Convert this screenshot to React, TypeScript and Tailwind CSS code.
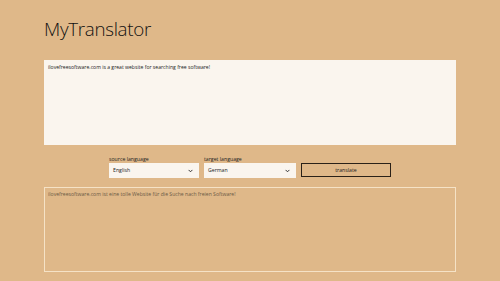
import { useState } from "react";

function Chevron() {
  return (
    <svg width="5" height="4" viewBox="0 0 5 4" className="absolute right-[6px] top-[6px] w-[5px] h-[4px]">
      <path d="M0.6 0.9 L2.5 2.8 L4.4 0.9" fill="none" stroke="#222" strokeWidth="0.9" />
    </svg>
  );
}

export default function App() {
  const [source, setSource] = useState(
    "ilovefreesoftware.com is a great website for searching free software!"
  );

  return (
    <div className="w-[500px] h-[281px] bg-[#dfb889] overflow-hidden font-['Open_Sans',sans-serif]">
      <div className="px-[44px] pt-[15px]">
        <h1 className="text-[18.8px] font-light leading-[28px] text-[#111] tracking-[-0.3px]">
          MyTranslator
        </h1>

        <textarea
          value={source}
          onChange={(e) => setSource(e.target.value)}
          className="
            mt-[17px]
            block
            w-[412px]
            h-[85px]
            resize-none
            bg-[#faf5ee]
            px-[4px]
            py-[3px]
            text-[5.1px]
            leading-[8px]
            text-[#222]
            outline-none
          "
        />

        <div className="mt-[10px] ml-[65px] flex items-end gap-[5px]">
          <div className="flex flex-col">
            <span className="text-[5.2px] leading-[8px] text-[#222]">source language</span>
            <div className="relative w-[90px] h-[15px] bg-[#faf5ee]">
              <span className="absolute left-[4px] top-[3px] text-[5.2px] leading-[8px] text-[#222]">
                English
              </span>
              <Chevron />
            </div>
          </div>

          <div className="flex flex-col">
            <span className="text-[5.2px] leading-[8px] text-[#222]">target language</span>
            <div className="relative w-[92px] h-[15px] bg-[#faf5ee]">
              <span className="absolute left-[4px] top-[3px] text-[5.2px] leading-[8px] text-[#222]">
                German
              </span>
              <Chevron />
            </div>
          </div>

          <button className="
            w-[90px]
            h-[14px]
            mb-[1px]
            border-[1.5px]
            border-[#2a2118]
            text-[5.2px]
            leading-[8px]
            text-[#222]
          ">
            translate
          </button>
        </div>

        <div className="
          mt-[9px]
          w-[412px]
          h-[85px]
          border
          border-[#f5e2c6]
          px-[3px]
          py-[2px]
          text-[5.1px]
          leading-[8px]
          text-[#6b5a45]
        ">
          ilovefreesoftware.com ist eine tolle Website für die Suche nach freien Software!
        </div>
      </div>
    </div>
  );
}
